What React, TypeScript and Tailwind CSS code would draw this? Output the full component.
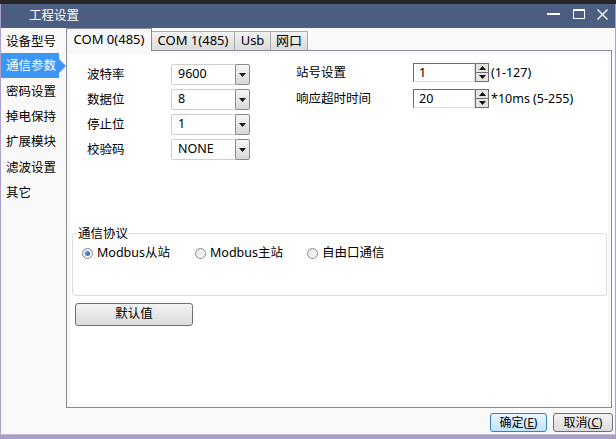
import React from 'react';

const FONT = { fontFamily: '"Noto Sans", "Noto Sans CJK SC", sans-serif' };

const sideItems = ['设备型号', '通信参数', '密码设置', '掉电保持', '扩展模块', '滤波设置', '其它'];
const tabs = ['COM 0(485)', 'COM 1(485)', 'Usb', '网口'];
const tabWidths = ['w-[86px]', 'w-[84px]', 'w-[37px]', 'w-[38px]'];
const combos = [
  { label: '波特率', value: '9600' },
  { label: '数据位', value: '8' },
  { label: '停止位', value: '1' },
  { label: '校验码', value: 'NONE' },
];
const spins = [
  { label: '站号设置', value: '1', hint: '(1-127)' },
  { label: '响应超时时间', value: '20', hint: '*10ms (5-255)' },
];
const radios = [
  { label: 'Modbus从站', checked: true, w: 'w-[113px]' },
  { label: 'Modbus主站', checked: false, w: 'w-[112px]' },
  { label: '自由口通信', checked: false, w: 'w-[80px]' },
];

function ComboBox({ value }: { value: string }) {
  return (
    <div className="flex h-[21px] w-[79px]">
      <div className="flex-1 -mr-[2px] border border-[#cfcfcf] rounded-[2px] bg-white pl-[6px] flex items-center text-[12.5px] text-black">
        {value}
      </div>
      <div className="w-[15px] border border-[#8a8a8a] rounded-[2px] bg-gradient-to-b from-[#f6f6f6] to-[#d8d8d8] flex items-center justify-center">
        <svg width="7" height="4" viewBox="0 0 7 4">
          <path d="M0 0h7L3.5 4z" fill="#1a1a1a" />
        </svg>
      </div>
    </div>
  );
}

function SpinBox({ value }: { value: string }) {
  return (
    <div className="flex h-[19px]">
      <div className="w-[62px] border-t border-l border-[#6b6b6b] border-b border-r border-b-[#dcdcdc] border-r-[#dcdcdc] bg-white pl-[5px] flex items-center text-[12.5px] leading-none pt-[2px]">
        {value}
      </div>
      <div className="w-[14px] flex flex-col border border-[#6f6f6f] bg-[#e4e4e4]">
        <div className="flex-1 flex items-center justify-center border-b border-[#6f6f6f]">
          <svg width="7" height="4" viewBox="0 0 7 4">
            <path d="M0 4h7L3.5 0z" fill="#111" />
          </svg>
        </div>
        <div className="flex-1 flex items-center justify-center">
          <svg width="7" height="4" viewBox="0 0 7 4">
            <path d="M0 0h7L3.5 4z" fill="#111" />
          </svg>
        </div>
      </div>
    </div>
  );
}

function Radio({ checked }: { checked: boolean }) {
  return (
    <div className="w-[11px] h-[11px] rounded-full border border-[#8c8c8c] bg-gradient-to-br from-[#dedede] to-white flex items-center justify-center">
      {checked && <div className="w-[5px] h-[5px] rounded-full bg-gradient-to-br from-[#6aa6e8] to-[#1c5aa8]" />}
    </div>
  );
}

export default function App() {
  return (
    <div className="w-[616px] h-[439px] flex flex-col bg-[#262626] overflow-hidden text-[12px] text-black" style={FONT}>
      <div className="h-[4px] shrink-0" />
      <div className="flex-1 min-h-0 flex flex-col bg-[#f9f9f9] border-l border-r border-[#a9a1c9]">
        {/* title bar */}
        <div className="h-[24px] shrink-0 bg-[#4b5e81] flex items-center pl-[28px] pr-[7px] text-white">
          <span className="text-[12.5px] mt-[1px]">工程设置</span>
          <div className="ml-auto flex items-center gap-[12px] -mt-[4px]">
            <div className="w-[13px] h-[2px] bg-white mr-[1px]" />
            <div className="w-[12px] h-[10px] border border-white border-t-[2px]" />
            <svg width="11" height="11" viewBox="0 0 11 11">
              <path d="M0.5 0.5l10 10M10.5 0.5l-10 10" stroke="white" strokeWidth="1.4" />
            </svg>
          </div>
        </div>

        <div className="flex flex-1 min-h-0">
          {/* sidebar */}
          <div className="w-[65px] shrink-0 flex flex-col pt-[1px]">
            {sideItems.map((item, i) =>
              i === 1 ? (
                <div key={item} className="h-[25.2px] flex items-center -mt-[1px] mb-[1px]">
                  <div className="w-[58px] h-[25px] bg-[#3d95f6] text-white flex items-center pl-[5px] pt-[1px] text-[12.5px]">
                    {item}
                  </div>
                  <svg width="7" height="14" viewBox="0 0 7 14">
                    <path d="M0 0l7 7-7 7z" fill="#3d95f6" />
                  </svg>
                </div>
              ) : (
                <div key={item} className="h-[25.2px] flex items-center pl-[5px] pt-[1px] text-[12.5px]">
                  {item}
                </div>
              )
            )}
          </div>

          {/* tabs + panel */}
          <div className="w-[546px] shrink-0 flex flex-col">
            <div className="h-[22px] flex items-end shrink-0">
              {tabs.map((tab, i) =>
                i === 0 ? (
                  <div
                    key={tab}
                    className={`${tabWidths[i]} h-[23px] -mb-px relative z-10 border-l border-t border-r border-[#898c95] bg-[#f7f7f7] flex items-center justify-center text-[13px]`}
                  >
                    {tab}
                  </div>
                ) : (
                  <div
                    key={tab}
                    className={`${tabWidths[i]} h-[19px] -ml-px border border-b-0 border-[#a9a9a9] bg-gradient-to-b from-[#f3f3f3] to-[#dadada] flex items-center justify-center text-[13px]`}
                  >
                    {tab}
                  </div>
                )
              )}
            </div>
            <div className="flex-1 border border-[#898c95] bg-[#f7f7f7] p-[3px] flex">
              <div className="flex-1 bg-white flex flex-col">
                <div className="flex pl-[17px] pt-[10px]">
                  <div className="flex flex-col">
                    {combos.map(c => (
                      <div key={c.label} className="h-[25px] flex items-start">
                        <span className="w-[84px] text-[12.5px] leading-[21px]">{c.label}</span>
                        <ComboBox value={c.value} />
                      </div>
                    ))}
                  </div>
                  <div className="flex flex-col ml-[46px] -mt-[1px]">
                    {spins.map(s => (
                      <div key={s.label} className="h-[26px] flex items-start">
                        <span className="w-[117px] text-[12.5px] leading-[19px]">{s.label}</span>
                        <SpinBox value={s.value} />
                        <span className="ml-[2px] text-[12.5px] leading-[19px]">{s.hint}</span>
                      </div>
                    ))}
                  </div>
                </div>

                <fieldset className="mt-[61px] ml-[2px] mr-[1px] border border-[#d5dfe5] rounded-[3px] px-[9px]">
                  <legend className="ml-[-5px] px-[1px] text-[12.5px] leading-[17px]">通信协议</legend>
                  <div className="h-[53px] flex items-start pt-[3px]">
                    {radios.map(r => (
                      <div key={r.label} className={`${r.w} flex items-center gap-[4px] h-[17px]`}>
                        <Radio checked={r.checked} />
                        <span className="text-[12.5px]">{r.label}</span>
                      </div>
                    ))}
                  </div>
                </fieldset>

                <button className="mt-[7px] ml-[5px] w-[118px] h-[23px] border border-[#707070] rounded-[3px] bg-gradient-to-b from-[#f3f3f3] to-[#dcdcdc] text-[12.5px] flex items-center justify-center">
                  默认值
                </button>
              </div>
            </div>
          </div>
        </div>

        {/* footer */}
        <div className="h-[26px] shrink-0 flex justify-end items-start pt-[5px] pr-[2px] gap-[6px]">
          <button className="w-[57px] h-[19px] border border-[#3c7fb1] rounded-[3px] bg-gradient-to-b from-[#eaf6fd] to-[#bee6fd] text-[12px] flex items-center justify-center">
            确定(<span className="underline">E</span>)
          </button>
          <button className="w-[60px] h-[19px] border border-[#707070] rounded-[3px] bg-gradient-to-b from-[#f3f3f3] to-[#dcdcdc] text-[12px] flex items-center justify-center">
            取消(<span className="underline">C</span>)
          </button>
        </div>
      </div>
      <div className="h-[5px] shrink-0 bg-[#ab9fc9] border-t border-[#c4bbdb]" />
    </div>
  );
}
